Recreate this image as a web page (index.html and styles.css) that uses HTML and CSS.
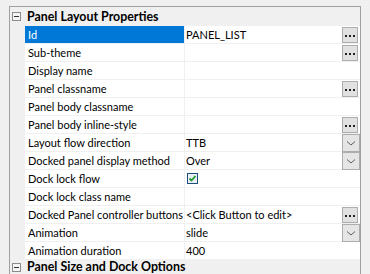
FILE: index.html
```html
<!DOCTYPE html>
<html lang="en">
  <head>
    <meta charset="UTF-8" />
    <title>Panel Properties</title>
    <link rel="stylesheet" href="styles.css">
  </head>
  <body>
    <div class="grid-frame">
      <div class="group-head">
        <span class="toggle"></span>
        <span>Panel Layout Properties</span>
      </div>

      <div class="prop selected">
        <div class="prop-name">Id</div>
        <div class="prop-value"><span>PANEL_LIST</span><span class="dots-btn"></span></div>
      </div>
      <div class="prop">
        <div class="prop-name">Sub-theme</div>
        <div class="prop-value"><span></span><span class="dots-btn"></span></div>
      </div>
      <div class="prop">
        <div class="prop-name">Display name</div>
        <div class="prop-value"></div>
      </div>
      <div class="prop">
        <div class="prop-name">Panel classname</div>
        <div class="prop-value"><span></span><span class="dots-btn"></span></div>
      </div>
      <div class="prop">
        <div class="prop-name">Panel body classname</div>
        <div class="prop-value"></div>
      </div>
      <div class="prop">
        <div class="prop-name">Panel body inline-style</div>
        <div class="prop-value"><span></span><span class="dots-btn"></span></div>
      </div>
      <div class="prop">
        <div class="prop-name">Layout flow direction</div>
        <div class="prop-value">
          <span>TTB</span>
          <span class="drop-btn"><svg width="16" height="16" viewBox="0 0 16 16"><path d="M4 6.5 L8 10 L12 6.5" fill="none" stroke="#606060" /></svg></span>
        </div>
      </div>
      <div class="prop">
        <div class="prop-name">Docked panel display method</div>
        <div class="prop-value">
          <span>Over</span>
          <span class="drop-btn"><svg width="16" height="16" viewBox="0 0 16 16"><path d="M4 6.5 L8 10 L12 6.5" fill="none" stroke="#606060" /></svg></span>
        </div>
      </div>
      <div class="prop">
        <div class="prop-name">Dock lock flow</div>
        <div class="prop-value">
          <svg class="check" width="11" height="11" viewBox="0 0 11 11">
            <rect x="0.5" y="0.5" width="10" height="10" fill="#e9eff5" stroke="#1d4f7c" />
            <path d="M2.5 5.5 L4.5 7.5 L8.5 3" fill="none" stroke="#1f9a2e" stroke-width="1.8" />
          </svg>
        </div>
      </div>
      <div class="prop">
        <div class="prop-name">Dock lock class name</div>
        <div class="prop-value"></div>
      </div>
      <div class="prop">
        <div class="prop-name">Docked Panel controller buttons</div>
        <div class="prop-value"><span>&lt;Click Button to edit&gt;</span><span class="dots-btn"></span></div>
      </div>
      <div class="prop">
        <div class="prop-name">Animation</div>
        <div class="prop-value">
          <span>slide</span>
          <span class="drop-btn"><svg width="16" height="16" viewBox="0 0 16 16"><path d="M4 6.5 L8 10 L12 6.5" fill="none" stroke="#606060" /></svg></span>
        </div>
      </div>
      <div class="prop">
        <div class="prop-name">Animation duration</div>
        <div class="prop-value">400</div>
      </div>

      <div class="group-head last">
        <span class="toggle"></span>
        <span>Panel Size and Dock Options</span>
      </div>
    </div>
  </body>
</html>
```

FILE: styles.css
```css
body {
  margin: 0;
  padding: 6px 0 0 9px;
  background: #f0f0f0;
  font-family: "Lato", "Liberation Sans", sans-serif;
  font-size: 11px;
  color: #000;
  overflow: hidden;
  height: 268px;
}

.grid-frame {
  width: 350px;
  height: 267px;
  border: 1px solid #a0a0a0;
  border-bottom: none;
  background: #f0f0f0;
  overflow: hidden;
}

.group-head {
  display: flex;
  align-items: center;
  height: 19px;
  font-weight: bold;
  font-size: 12.4px;
}

.group-head.last {
  height: 14px;
  line-height: 14px;
}

.group-head .toggle {
  position: relative;
  box-sizing: border-box;
  width: 9px;
  height: 9px;
  margin: 0 6px 0 2px;
  border: 1px solid #8c8c8c;
  background: #f4f4f4;
}

.group-head .toggle::after {
  content: "";
  position: absolute;
  left: 1px;
  top: 3px;
  width: 5px;
  height: 1px;
  background: #333;
}

.prop {
  display: grid;
  grid-template-columns: 159px 175px;
  column-gap: 1px;
  margin-left: 15px;
  height: 18px;
}

.prop-name,
.prop-value {
  background: #fff;
  height: 17px;
  line-height: 17px;
  white-space: nowrap;
  overflow: hidden;
}

.prop-name {
  padding-left: 3px;
}

.prop-value {
  display: flex;
  justify-content: space-between;
  align-items: center;
  padding-left: 1px;
  overflow: visible;
}

.prop.selected .prop-name {
  background: #0078d7;
  color: #fff;
}

.dots-btn {
  box-sizing: border-box;
  width: 16px;
  height: 16px;
  margin: 1px 2px 0 0;
  align-self: flex-start;
  border: 1px solid #adadad;
  background: #e1e1e1;
  position: relative;
}

.dots-btn::after {
  content: "";
  position: absolute;
  left: 2px;
  top: 7px;
  width: 2px;
  height: 2px;
  background: #222;
  box-shadow: 4px 0 0 #222, 8px 0 0 #222;
}

.drop-btn {
  box-sizing: border-box;
  width: 18px;
  height: 18px;
  align-self: flex-start;
  border: 1px solid #adadad;
  background: #e5e5e5;
}

.drop-btn svg {
  display: block;
}

.check {
  display: block;
  margin-left: 1px;
}
```
